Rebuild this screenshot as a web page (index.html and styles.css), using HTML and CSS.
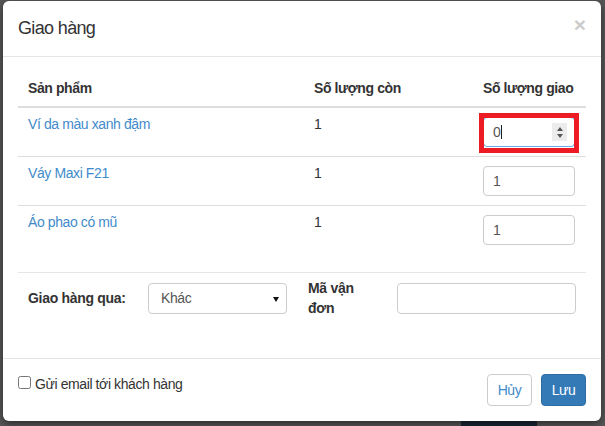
FILE: index.html
```html
<!DOCTYPE html>
<html lang="vi">
<head>
<meta charset="utf-8">
<title>Giao hàng</title>
<link rel="stylesheet" href="styles.css">
</head>
<body>
<div class="backdrop-block"></div>
<div class="page">
  <div class="modal">
    <div class="modal-header">
      <h4 class="modal-title">Giao hàng</h4>
      <button class="close" type="button">×</button>
    </div>
    <div class="modal-body">
      <table class="items">
        <colgroup><col class="c1"><col class="c2"><col class="c3"></colgroup>
        <thead>
          <tr><th>Sản phẩm</th><th>Số lượng còn</th><th>Số lượng giao</th></tr>
        </thead>
        <tbody>
          <tr>
            <td><a class="link">Ví da màu xanh đậm</a></td>
            <td>1</td>
            <td class="qty">
              <div class="highlight">
                <div class="num-input focused">0<span class="caret"></span>
                  <span class="spin"><span class="up"></span><span class="down"></span></span>
                </div>
              </div>
            </td>
          </tr>
          <tr>
            <td><a class="link">Váy Maxi F21</a></td>
            <td>1</td>
            <td class="qty"><input class="num-input" type="text" value="1"></td>
          </tr>
          <tr>
            <td><a class="link">Áo phao có mũ</a></td>
            <td>1</td>
            <td class="qty"><input class="num-input" type="text" value="1"></td>
          </tr>
        </tbody>
      </table>
      <hr class="sep">
      <div class="ship-row">
        <label class="lbl">Giao hàng qua:</label>
        <div class="select-wrap">
          <select class="select"><option>Khác</option></select>
        </div>
        <span></span>
        <label class="lbl lbl-wrap">Mã vận đơn</label>
        <input class="text-input" type="text">
      </div>
    </div>
    <div class="modal-footer">
      <label class="check"><input type="checkbox" class="cb"><span>Gửi email tới khách hàng</span></label>
      <div class="actions">
        <button class="btn btn-default" type="button">Hủy</button>
        <button class="btn btn-primary" type="button">Lưu</button>
      </div>
    </div>
  </div>
</div>
</body>
</html>
```
FILE: styles.css
```css
* { box-sizing: border-box; }
html, body { margin: 0; padding: 0; }
body {
  background: #575757;
  font-family: "Liberation Sans", Arial, sans-serif;
  font-size: 14px;
  line-height: 20px;
  color: #333;
  letter-spacing: -0.4px;
  position: relative;
  height: 426px;
  overflow: hidden;
}
.backdrop-block {
  position: absolute;
  left: 461px;
  top: 418px;
  width: 76px;
  height: 10px;
  background: #1c2636;
}
.page {
  padding: 1px 4px 0 3px;
  position: relative;
}
.modal {
  width: 598px;
  background: #fff;
  border-radius: 6px;
  box-shadow: 0 3px 9px rgba(0,0,0,0.5);
}
.modal-header {
  padding: 15px;
  border-bottom: 1px solid #e5e5e5;
  display: flex;
  justify-content: space-between;
  align-items: flex-start;
}
.modal-title {
  margin: 0;
  font-size: 18px;
  line-height: 25px;
  font-weight: normal;
  letter-spacing: -0.65px;
}
.close {
  border: 0;
  background: none;
  padding: 0;
  margin-top: -2px;
  font-family: "Liberation Sans", Arial, sans-serif;
  font-size: 21px;
  font-weight: bold;
  line-height: 1;
  color: #000;
  opacity: 0.2;
}
.modal-body {
  padding: 13px 15px 40px;
}
.items {
  width: 100%;
  border-collapse: separate;
  border-spacing: 0;
}
.c1 { width: 286px; }
.c2 { width: 169px; }
.c3 { width: 113px; }
.items th {
  text-align: left;
  font-weight: bold;
  padding: 8px 10px;
  border-bottom: 2px solid #ddd;
  letter-spacing: -0.4px;
}
.items td {
  padding: 6px 10px;
  vertical-align: top;
  border-bottom: 1px solid #ddd;
}
.items tbody tr:last-child td { border-bottom: 0; }
.items td.qty { padding: 9px 10px; }
.link { color: #428bca; text-decoration: none; }
.num-input {
  display: block;
  width: 92px;
  height: 30px;
  border: 1px solid #ccc;
  border-radius: 4px;
  padding: 0 9px;
  font-family: inherit;
  font-size: 14px;
  letter-spacing: inherit;
  line-height: 28px;
  color: #555;
  background: #fff;
  margin: 0;
}
.num-input.focused {
  border-color: #66afe9;
  position: relative;
}
.caret {
  display: inline-block;
  width: 1px;
  height: 14px;
  background: #222;
  vertical-align: -2px;
  margin-left: 1px;
}
.spin {
  position: absolute;
  left: 68px;
  top: 5px;
  width: 15px;
  height: 18px;
  background: #ececec;
  display: flex;
  flex-direction: column;
  align-items: center;
  justify-content: center;
  gap: 3px;
}
.spin .up {
  width: 0; height: 0;
  border-left: 3.5px solid transparent;
  border-right: 3.5px solid transparent;
  border-bottom: 4px solid #555;
}
.spin .down {
  width: 0; height: 0;
  border-left: 3.5px solid transparent;
  border-right: 3.5px solid transparent;
  border-top: 4px solid #555;
}
.highlight { position: relative; width: 92px; }
.highlight::after {
  content: "";
  position: absolute;
  left: -4px;
  right: -4px;
  top: -4px;
  bottom: -6px;
  border: 5px solid #ed1c24;
  pointer-events: none;
}
.sep {
  margin: 18px 0 5px;
  border: 0;
  border-top: 1px solid #e5e5e5;
  height: 0;
}
.ship-row {
  display: grid;
  grid-template-columns: 120px 139px 21px 89px 179px;
  align-items: center;
  padding: 0 10px;
}
.lbl {
  font-weight: bold;
  letter-spacing: -0.3px;
}
.lbl-wrap { padding-right: 29px; }
.select-wrap {
  position: relative;
  height: 31px;
}
.select-wrap::after {
  content: "";
  position: absolute;
  right: 8px;
  top: 14px;
  width: 0; height: 0;
  border-left: 3px solid transparent;
  border-right: 3px solid transparent;
  border-top: 5px solid #111;
  pointer-events: none;
}
.select {
  -webkit-appearance: none;
  appearance: none;
  width: 139px;
  height: 31px;
  border: 1px solid #ccc;
  border-radius: 4px;
  background: #fff;
  padding: 0 0 0 12px;
  font-family: inherit;
  font-size: 14px;
  letter-spacing: inherit;
  color: #555;
  margin: 0;
}
.text-input {
  width: 179px;
  height: 31px;
  border: 1px solid #ccc;
  border-radius: 4px;
  background: #fff;
  margin: 0;
}
.modal-footer {
  border-top: 1px solid #e5e5e5;
  padding: 15px;
  display: flex;
  justify-content: space-between;
  align-items: flex-start;
}
.check {
  display: flex;
  align-items: flex-start;
}
.cb {
  width: 13px;
  height: 13px;
  margin: 2px 4px 0 0;
}
.actions { display: flex; gap: 9px; }
.btn {
  width: 45px;
  height: 32px;
  padding: 5px 0;
  border: 1px solid #ccc;
  border-radius: 4px;
  font-family: inherit;
  font-size: 14px;
  line-height: 20px;
  letter-spacing: -0.4px;
  text-align: center;
}
.btn-default { background: #fff; color: #428bca; }
.btn-primary { background: #337ab7; border-color: #2e6da4; color: #fff; }
```
